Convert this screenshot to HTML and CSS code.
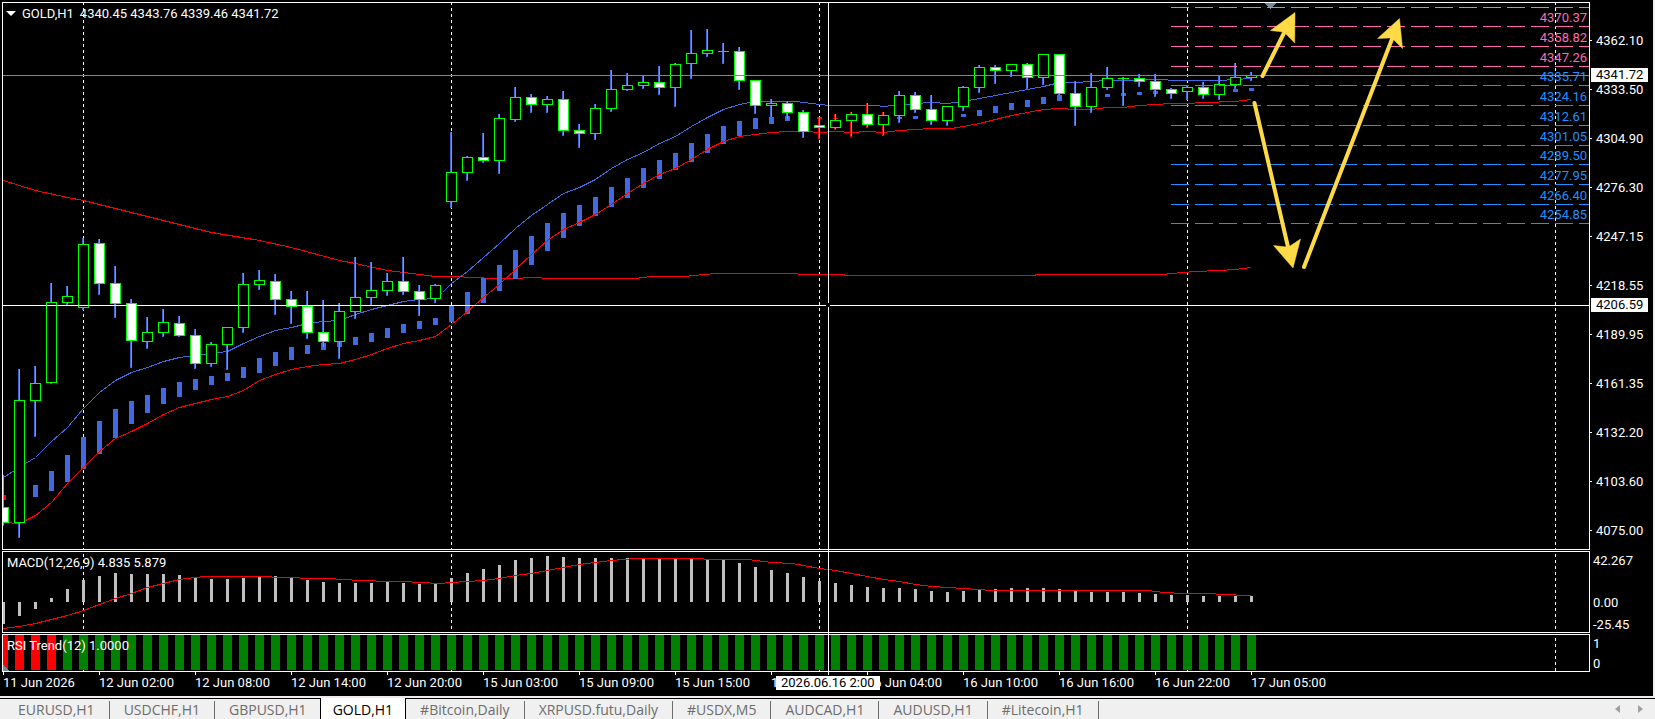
FILE: index.html
```
<!DOCTYPE html>
<html lang="en">
<head>
  <meta charset="UTF-8">
  <meta name="viewport" content="width=device-width, initial-scale=1.0">
  <title>GOLD,H1</title>
  <link rel="stylesheet" href="styles.css">
</head>
<body>

  <main class="chart-window">
    <section class="pane pane-price">
      <svg id="price" class="plot"></svg>
      <h1 class="pane-title">
        <svg class="caret" width="10" height="5"><path d="M0 0h10l-5 5z" fill="#fff"/></svg>
        <span>GOLD,H1</span>
        <span>4340.45 4343.76 4339.46 4341.72</span>
      </h1>
    </section>
    <div class="axis axis-price">
      <span>4362.10</span>
      <span>4333.50</span>
      <span>4304.90</span>
      <span>4276.30</span>
      <span>4247.15</span>
      <span>4218.55</span>
      <span>4189.95</span>
      <span>4161.35</span>
      <span>4132.20</span>
      <span>4103.60</span>
      <span>4075.00</span>
      <b class="badge badge-last">4341.72</b>
      <b class="badge badge-cursor">4206.59</b>
    </div>

    <section class="pane pane-macd">
      <svg id="macd" class="plot"></svg>
      <h2 class="pane-title">MACD(12,26,9) 4.835 5.879</h2>
    </section>
    <div class="axis axis-macd">
      <span>42.267</span>
      <span>0.00</span>
      <span>-25.45</span>
    </div>

    <section class="pane pane-rsi">
      <svg id="rsi" class="plot"></svg>
      <h2 class="pane-title">RSI Trend(12) 1.0000</h2>
    </section>
    <div class="axis axis-rsi">
      <span>1</span>
      <span>0</span>
    </div>

    <div class="axis-time">
      <span>11 Jun 2026</span>
      <span>12 Jun 02:00</span>
      <span>12 Jun 08:00</span>
      <span>12 Jun 14:00</span>
      <span>12 Jun 20:00</span>
      <span>15 Jun 03:00</span>
      <span>15 Jun 09:00</span>
      <span>15 Jun 15:00</span>
      <span>15 Jun 21:00</span>
      <span>16 Jun 04:00</span>
      <span>16 Jun 10:00</span>
      <span>16 Jun 16:00</span>
      <span>16 Jun 22:00</span>
      <span>17 Jun 05:00</span>
      <b class="badge badge-time">2026.06.16 2:00</b>
    </div>
    <div class="crosshair"></div>
  </main>

  <nav class="tabs">
    <a href="#eurusd">EURUSD,H1</a>
    <a href="#usdchf">USDCHF,H1</a>
    <a href="#gbpusd">GBPUSD,H1</a>
    <a href="#gold" class="active">GOLD,H1</a>
    <a href="#bitcoin">#Bitcoin,Daily</a>
    <a href="#xrpusd">XRPUSD.futu,Daily</a>
    <a href="#usdx">#USDX,M5</a>
    <a href="#audcad">AUDCAD,H1</a>
    <a href="#audusd">AUDUSD,H1</a>
    <a href="#litecoin">#Litecoin,H1</a>
    <div class="scroll">
      <button type="button" aria-label="Scroll tabs left"><svg width="5" height="8"><path d="M5 0v8L0 4z" fill="#a0a0a0"/></svg></button>
      <button type="button" aria-label="Scroll tabs right"><svg width="5" height="8"><path d="M0 0v8l5-4z" fill="#a0a0a0"/></svg></button>
    </div>
  </nav>

  <script src="script.js"></script>
</body>
</html>
```

FILE: styles.css
```
* {
  box-sizing: border-box;
}

body {
  margin: 0;
  min-height: 100vh;
  display: flex;
  flex-direction: column;
  background-color: #f0f0f0;
  font-family: Roboto, "Noto Sans", sans-serif;
  font-size: 13px;
  line-height: 15px;
  color: #fff;
}

.chart-window {
  position: relative;
  display: grid;
  grid-template-columns: minmax(0, 1fr) 63px;
  grid-template-rows: 548px 82px 38px 23px;
  row-gap: 1px;
  padding: 2px 0 0 2px;
  background-color: #000;
  border-right: 2px solid #f0f0f0;
  border-bottom: 2px solid #f0e8ec;
  overflow: hidden;
}

.pane {
  position: relative;
  border: 1px solid #fff;
}

.plot {
  display: block;
  width: 100%;
  height: 100%;
  shape-rendering: crispEdges;
}

.pane-title {
  position: absolute;
  top: 3px;
  left: 4px;
  display: flex;
  align-items: center;
  gap: 6px;
  margin: 0;
  font-size: 13px;
  font-weight: normal;
  white-space: nowrap;
}

.pane-price .pane-title {
  left: 3px;
}

.level {
  text-anchor: end;
}

/* right hand scales */
.axis {
  position: relative;
  display: flex;
  flex-direction: column;
  padding-left: 3px;
}

.axis-price {
  padding: 14px 0 0 6px;
}

.axis-price span {
  position: relative;
  line-height: 49px;
}

.axis-price span::before {
  content: "";
  position: absolute;
  left: -6px;
  top: 24px;
  width: 2px;
  height: 1px;
  background-color: #fff;
}

.axis-macd {
  padding: 2px 0 1px 3px;
  justify-content: space-between;
}

.axis-macd span:nth-child(2) {
  margin-top: 20px;
}

.axis-rsi {
  padding: 2px 0 0 3px;
  gap: 5px;
}

.badge {
  position: absolute;
  background-color: #fff;
  color: #000;
  font-weight: normal;
  line-height: 14px;
  padding: 0 5px;
  white-space: nowrap;
}

.badge-last {
  left: 1px;
  top: 66px;
}

.badge-cursor {
  left: 1px;
  top: 296px;
}

.axis-time {
  position: relative;
  display: flex;
  margin-top: -1px;
  padding-left: 1px;
}

.axis-time span {
  flex: 0 0 96px;
  background: linear-gradient(#fff, #fff) no-repeat 0 0 / 1px 3px;
  line-height: 22px;
  white-space: nowrap;
}

.badge-time {
  left: 774px;
  top: 4px;
}

.crosshair {
  position: absolute;
  left: 828px;
  top: 3px;
  height: 672px;
  width: 1px;
  background: linear-gradient(#fff 300px, #000 300px, #000 304px, #fff 304px);
}

/* chart tabs */
.tabs {
  display: flex;
  flex: 1;
  border-top: 1px solid #000;
  padding-left: 4px;
  font-family: "Open Sans", "Noto Sans", sans-serif;
  font-size: 14px;
  line-height: 19px;
}

.tabs a {
  position: relative;
  padding: 1px 15px 0 14px;
  color: #6d6d6d;
  text-decoration: none;
  white-space: nowrap;
}

.tabs a::after {
  content: "";
  position: absolute;
  right: 0;
  top: 2px;
  bottom: 0;
  width: 1px;
  background-color: #6d6d6d;
}

.tabs .active {
  margin: -1px 0 0 -2px;
  padding: 2px 12px 0;
  background-color: #fff;
  color: #000;
  border: solid #000;
  border-width: 0 1px;
}

.tabs .active::after {
  display: none;
}

.scroll {
  display: flex;
  align-items: center;
  gap: 18px;
  margin-left: auto;
  padding-right: 12px;
}

.scroll button {
  display: flex;
  padding: 0;
  border: 0;
  background: none;
}
```

FILE: script.js
```
const STEP = 16;
const LEFT = 3;
const BLUE = '#4169e1';
const LIME = '#00ff00';
const RED = '#ff0000';

// high, body top, body bottom, low, filled, wick colour
const candles = [
  [475, 507, 523, 526, 1], [369, 400, 523, 538, 0], [366, 383, 401, 437, 0], [283, 302, 383, 384, 0],
  [286, 296, 303, 305, 0], [238, 244, 308, 310, 0], [239, 243, 284, 295, 1], [266, 283, 304, 318, 1],
  [299, 303, 341, 368, 1], [317, 332, 342, 349, 0], [309, 322, 333, 337, 0], [316, 323, 336, 337, 1],
  [329, 335, 364, 369, 1], [342, 344, 364, 367, 0], [327, 327, 345, 370, 0], [273, 284, 328, 333, 0],
  [270, 280, 285, 290, 0], [274, 281, 300, 315, 1], [291, 299, 307, 324, 1], [291, 306, 333, 339, 1],
  [300, 332, 342, 348, 1], [303, 311, 342, 359, 0], [257, 297, 312, 319, 0], [262, 290, 298, 305, 0],
  [273, 281, 291, 296, 0], [257, 281, 292, 295, 1], [285, 291, 300, 316, 1], [284, 285, 299, 303, 0],
  [132, 172, 202, 208, 0], [156, 157, 173, 181, 0], [133, 157, 161, 163, 1], [114, 118, 161, 174, 0],
  [87, 97, 120, 122, 0], [94, 97, 105, 113, 1], [96, 99, 105, 113, 0], [91, 99, 131, 136, 1],
  [124, 130, 134, 148, 1], [104, 108, 134, 140, 0], [70, 89, 109, 112, 0], [73, 85, 90, 91, 0],
  [76, 82, 86, 89, 0], [66, 82, 88, 95, 1], [63, 64, 88, 107, 0], [30, 53, 64, 79, 0],
  [29, 50, 54, 57, 0], [43, 51, 52, 64, 0], [47, 51, 81, 90, 1], [80, 80, 106, 114, 1],
  [99, 103, 106, 118, 0], [101, 103, 113, 120, 1], [110, 112, 132, 138, 1], [117, 125, 128, 139, 1, RED],
  [114, 120, 128, 130, 0, RED], [112, 114, 121, 137, 0, RED], [103, 114, 125, 128, 1, RED], [112, 115, 125, 136, 0, RED],
  [91, 95, 116, 123, 0], [92, 95, 110, 113, 1], [95, 109, 121, 125, 1], [106, 106, 121, 126, 0],
  [86, 87, 107, 111, 0], [65, 67, 88, 93, 0], [65, 67, 71, 84, 1], [64, 64, 71, 77, 0],
  [63, 64, 78, 89, 1], [54, 54, 78, 85, 0], [54, 54, 94, 96, 1], [81, 93, 107, 126, 1],
  [73, 87, 107, 113, 0], [67, 78, 88, 90, 0], [77, 78, 79, 106, 0], [74, 78, 82, 87, 1],
  [74, 81, 90, 97, 1], [88, 89, 94, 99, 1], [86, 87, 92, 100, 0], [82, 87, 95, 99, 1],
  [76, 84, 95, 100, 0], [63, 77, 85, 89, 0], [72, 75, 78, 81, 0]
];

// index: top, bottom, colour
const ribbon = {
  0: [495, 500, RED], 2: [485, 497], 3: [471, 491], 4: [455, 482], 5: [437, 469], 6: [421, 454], 7: [409, 438],
  8: [401, 424], 9: [395, 413], 10: [388, 404], 11: [382, 397], 12: [379, 390], 13: [376, 385], 14: [373, 381],
  15: [367, 378], 16: [358, 373], 17: [352, 366], 18: [347, 360], 19: [345, 354], 20: [343, 350], 21: [342, 347],
  22: [337, 345], 23: [333, 342], 24: [328, 338], 25: [324, 333], 26: [321, 329], 27: [318, 325], 28: [305, 322],
  29: [292, 314], 30: [278, 303], 31: [265, 291], 32: [250, 279], 33: [236, 265], 34: [223, 251], 35: [213, 238],
  36: [205, 226], 37: [197, 216], 38: [187, 207], 39: [178, 198], 40: [168, 188], 41: [160, 179], 42: [153, 170],
  43: [143, 162], 44: [134, 153], 45: [126, 144], 46: [121, 136], 47: [118, 129], 48: [117, 124], 49: [116, 121],
  51: [117, 119, RED], 52: [118, 119, RED], 56: [117, 119], 57: [116, 119], 60: [114, 117], 61: [110, 116],
  62: [106, 113], 63: [103, 110], 64: [100, 107], 65: [97, 104], 66: [95, 101], 69: [94, 97], 70: [93, 96],
  71: [92, 95], 72: [91, 94], 77: [89, 92], 78: [88, 91]
};

const upperBand = '3,477 14,470 25,463 35,457 51,441 67,427 83,408 99,392 115,380 131,372 147,367 163,361 179,357 195,355 211,353 227,351 243,343 259,336 275,330 291,327 307,323 323,321 339,320 355,314 371,309 387,305 403,301 419,299 435,298 442,292 451,283 467,271 483,257 499,243 515,228 531,215 547,204 563,193 579,187 595,179 611,168 627,159 643,152 659,143 675,136 691,126 707,117 723,109 739,104 755,101 795,101 803,102 819,104 829,105 875,105 883,106 892,105 915,103 931,102 947,103 963,101 979,98 995,95 1011,92 1027,89 1043,86 1059,82 1075,82 1091,81 1107,80 1131,80 1139,79 1163,79 1171,80 1219,80 1235,79 1251,78';
const lowerBand = '3,522 19,523 25,520 35,515 51,502 67,483 83,467 99,451 115,438 131,431 147,423 163,414 179,407 195,403 211,399 227,396 243,390 259,380 275,374 291,369 307,366 323,364 339,363 355,359 371,354 387,348 403,343 419,340 435,336 451,324 467,311 483,297 499,284 515,269 531,254 547,240 563,229 579,222 595,214 611,204 627,193 643,183 659,174 675,168 691,159 707,149 723,141 739,136 755,134 771,132 787,131 805,131 819,132 835,131 851,132 867,131 883,132 899,130 915,129 931,128 951,128 963,126 979,123 995,119 1011,115 1027,112 1043,109 1059,108 1075,109 1091,109 1107,107 1123,107 1139,105 1155,104 1171,103 1187,103 1203,102 1235,101 1251,99';
const slowAverage = '3,180 35,190 67,197 83,200 99,204 147,216 211,232 259,240 291,247 339,260 355,263 387,270 403,272 435,276 459,276 467,277 499,278 520,278 525,277 537,277 545,278 634,278 651,276 683,276 715,273 795,273 800,274 843,274 845,275 1034,275 1036,274 1162,274 1171,273 1195,271 1219,270 1235,269 1251,267';

const macdBars = [
  624, 616, 609, 598, 589, 580, 576, 573, 574, 574, 574, 575, 578, 579, 579, 578, 576, 576, 578, 580,
  582, 583, 583, 583, 582, 583, 584, 584, 578, 573, 569, 565, 560, 558, 556, 557, 558, 558, 558, 558,
  559, 559, 559, 559, 560, 560, 563, 567, 570, 573, 577, 581, 583, 585, 587, 588, 588, 589, 591, 592,
  591, 590, 589, 588, 588, 588, 589, 591, 592, 592, 592, 593, 594, 595, 595, 596, 596, 596, 596
];
const macdSignal = '3,628 19,626 35,623 51,619 67,615 83,610 99,604 115,598 131,593 147,587 163,583 179,579 195,577 205,576 267,576 275,577 291,577 307,578 331,578 339,579 363,580 387,581 403,581 419,582 439,583 451,582 467,581 483,580 499,578 515,575 531,573 547,570 563,567 579,564 595,562 611,560 635,558 699,558 707,559 747,559 771,562 791,563 803,565 819,568 835,570 851,573 867,576 883,579 899,581 915,584 931,586 947,587 963,588 991,590 1147,590 1163,592 1183,593 1211,593 1219,594 1251,595';

const levels = [
  [7, '#ff69b4', ''], [26, '#ff69b4', '4370.37'], [46, '#ff69b4', '4358.82'], [66, '#ff69b4', '4347.26'],
  [85, '#1e90ff', '4335.71'], [105, '#1e90ff', '4324.16'], [125, '#1e90ff', '4312.61'], [145, '#1e90ff', '4301.05'],
  [164, '#1e90ff', '4289.50'], [184, '#1e90ff', '4277.95'], [204, '#1e90ff', '4266.40'], [223, '#1e90ff', '4254.85']
];

const rect = (x, y, w, h, fill) => `<rect x="${x}" y="${y}" width="${w}" height="${h}" fill="${fill}"/>`;

const line = (points, color) =>
  `<polyline points="${points}" transform="translate(.5 .5)" fill="none" stroke="${color}"/>`;

// day separators, drawn through all of the panes
function separators() {
  return [83, 451, 819, 1187, 1555].map(x =>
    `<path d="M${x}.5 2V674" stroke="#fff" stroke-dasharray="3 3"/>`).join('');
}

function candle([high, top, bottom, low, filled, wick = BLUE], i) {
  const x = LEFT + i * STEP;
  let out = rect(x - 1, high, 2, low - high, wick) + rect(x, high, 1, low - high - 1, LIME);
  out += rect(x - 5, top, 11, bottom - top, LIME);
  if (bottom - top > 2) {
    out += rect(x - 4, top + 1, 9, bottom - top - 2, filled ? '#fff' : '#000');
  }
  return out;
}

function drawPrice() {
  let g = separators();
  g += line(slowAverage, RED) + line(upperBand, BLUE);
  for (const i in ribbon) {
    const [top, bottom, color = BLUE] = ribbon[i];
    g += rect(LEFT + i * STEP - 2, top, 5, bottom - top, color);
  }
  g += line(lowerBand, RED);
  g += candles.map(candle).join('');
  g += '<path d="M1265 3h11l-5 6h-1z" fill="#778899"/>';

  let wide = '';
  for (const [y, color, label] of levels) {
    wide += `<line x1="1168" x2="100%" y1="${y - 2.5}" y2="${y - 2.5}" stroke="${color}" stroke-dasharray="18 6"/>`;
    if (label) {
      wide += `<text class="level" x="100%" dx="-2" y="${y - 7}" fill="${color}">${label}</text>`;
    }
  }
  wide += '<line x1="0" x2="100%" y1="72.5" y2="72.5" stroke="#778899"/>';
  wide += '<line x1="0" x2="100%" y1="302.5" y2="302.5" stroke="#fff"/>';
  wide += rect(823, 300, 4, 4, '#000');

  const arrows = `<g fill="#ffda47" stroke="#ffda47" shape-rendering="auto">
    <path d="M1262.5 76L1285 31M1254.5 103L1288 247M1304 267L1392 39" stroke-width="4" stroke-linecap="round"/>
    <path d="M1295 12.5L1270.5 30.5L1283 32L1287 35L1294.7 43zM1293 268L1273.5 245.5L1287 247L1290 246L1300.5 239zM1399.5 18.5L1377.5 38.5L1390 38L1394 40L1402.5 48.5z" stroke-width=".5"/>
  </g>`;
  document.getElementById('price').innerHTML =
    `<g transform="translate(-3 -3)">${g}</g>${wide}<g transform="translate(-3 -3)">${arrows}</g>`;
}

function drawMacd() {
  let g = separators();
  macdBars.forEach((y, i) => {
    g += rect(LEFT + i * STEP - 1, Math.min(y, 602), 3, Math.abs(602 - y), '#c0c0c0');
  });
  g += line(macdSignal, RED);
  document.getElementById('macd').innerHTML = `<g transform="translate(-3 -552)">${g}</g>`;
}

function drawRsi() {
  let g = separators();
  for (let i = 0; i < candles.length; i++) {
    g += rect(LEFT + i * STEP - 4, 635, 9, 35, i < 4 ? RED : '#008000');
  }
  g += '<path d="M3 665l6 6h-6z" fill="#778899"/>';
  document.getElementById('rsi').innerHTML = `<g transform="translate(-3 -635)">${g}</g>`;
}

drawPrice();
drawMacd();
drawRsi();
```
